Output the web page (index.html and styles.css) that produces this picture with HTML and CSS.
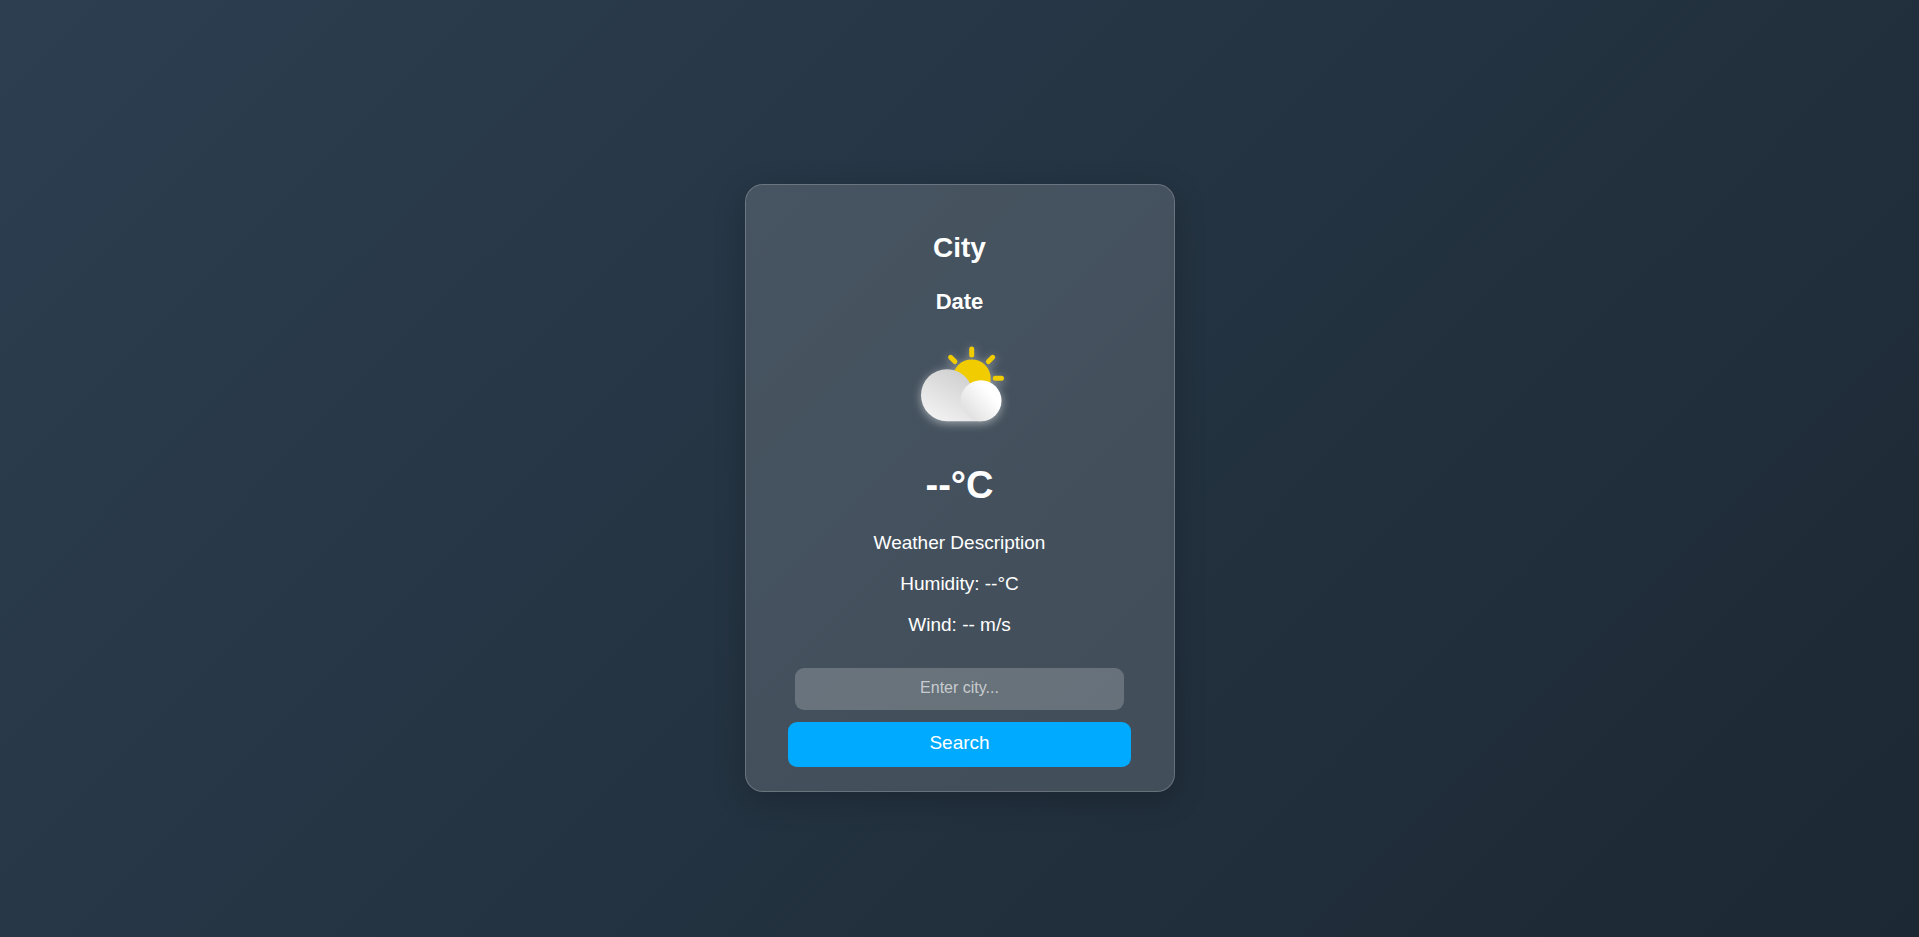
FILE: index.html
```html
<!DOCTYPE html>
<html lang="en">
<head>
  <meta charset="utf-8">
  <meta name="viewport" content="width=device-width, initial-scale=1">
  <title>Weather</title>
  <link rel="stylesheet" href="styles.css">
</head>
<body>
  <main class="card">
    <h1 class="city">City</h1>
    <h2 class="date">Date</h2>
    <svg class="icon" viewBox="10 10 100 100" role="img" aria-label="Partly cloudy">
      <defs>
        <linearGradient id="back" gradientUnits="userSpaceOnUse" x1="36" y1="90" x2="60" y2="45">
          <stop offset="0" stop-color="#f2f2f2"/>
          <stop offset="1" stop-color="#d2d2d2"/>
        </linearGradient>
        <linearGradient id="front" gradientUnits="userSpaceOnUse" x1="68" y1="82" x2="90" y2="63">
          <stop offset="0" stop-color="#e3e3e3"/>
          <stop offset="1" stop-color="#ffffff"/>
        </linearGradient>
      </defs>
      <g stroke="#f0cc00" stroke-width="5" stroke-linecap="round">
        <path d="M71.7 18.9v6.2M50.6 27.3l4.3 4.3M92.7 27.3l-4.3 4.3M95.3 48.3h6.2"/>
      </g>
      <circle cx="71.7" cy="48.4" r="19" fill="#f0cc00"/>
      <path d="M47 39.2A26 26 0 0 0 47 91.2H81V75H71.1A26 26 0 0 0 47 39.2z" fill="url(#back)"/>
      <circle cx="81" cy="70.7" r="20.5" fill="url(#front)"/>
    </svg>
    <p class="temp">--°C</p>
    <p class="detail">Weather Description</p>
    <p class="detail">Humidity: --°C</p>
    <p class="detail">Wind: -- m/s</p>
    <form class="search">
      <input class="field" type="text" placeholder="Enter city..." aria-label="City name">
      <button class="button" type="button">Search</button>
    </form>
  </main>
</body>
</html>
```
FILE: styles.css
```css
* {
  box-sizing: border-box;
}

body {
  display: flex;
  justify-content: center;
  align-items: center;
  min-height: 100vh;
  margin: 0;
  padding-top: 38px;
  font-family: "Liberation Sans", Arial, sans-serif;
  color: #fff;
  background: linear-gradient(135deg, #2c3e50, #1c2833);
}

.card {
  display: flex;
  flex-direction: column;
  align-items: center;
  width: 430px;
  max-width: 100%;
  padding: 46px 0 24px;
  text-align: center;
  background: rgba(255, 255, 255, 0.15);
  border: 1px solid rgba(255, 255, 255, 0.2);
  border-radius: 18px;
  box-shadow: 0 8px 32px rgba(0, 0, 0, 0.2);
}

.city {
  margin: 0 0 25px;
  font-size: 28px;
  line-height: 33px;
}

.date {
  margin: 0 0 26px;
  font-size: 22px;
  line-height: 25px;
}

.icon {
  width: 100px;
  height: 100px;
  margin-bottom: 24px;
  filter: drop-shadow(0 2px 5px rgba(255, 255, 255, 0.5));
}

.temp {
  margin: 0 0 25px;
  font-size: 38px;
  font-weight: bold;
  line-height: 43px;
}

.detail {
  margin: 0 0 19px;
  font-size: 19px;
  line-height: 22px;
}

.search {
  display: flex;
  flex-direction: column;
  align-items: center;
  gap: 12px;
  width: 80%;
  margin-top: 13px;
}

.field {
  width: 96%;
  height: 42px;
  padding: 0 12px 2px;
  border: 0;
  border-radius: 9px;
  font: inherit;
  font-size: 16px;
  text-align: center;
  color: #fff;
  background: rgba(255, 255, 255, 0.2);
}

.field::placeholder {
  color: rgba(255, 255, 255, 0.65);
}

.button {
  width: 100%;
  height: 45px;
  padding: 0 0 2px;
  border: 0;
  border-radius: 9px;
  font: inherit;
  font-size: 19px;
  color: #fff;
  background: #00aaff;
  cursor: pointer;
}
```
